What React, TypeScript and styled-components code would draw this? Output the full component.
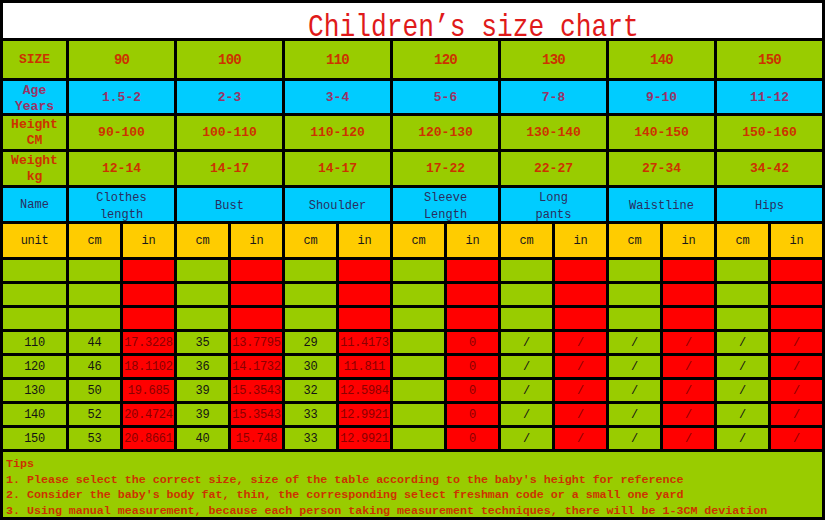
import React from "react";
import styled, { createGlobalStyle } from "styled-components";

const Global = createGlobalStyle`
  html, body { margin: 0; padding: 0; background: #000; }
  body { width: 825px; height: 520px; overflow: hidden; }
`;

const MONO = `"Liberation Mono", "DejaVu Sans Mono", "Noto Sans CJK SC", monospace`;

const GREEN = "#99cc00";
const CYAN = "#00ccff";
const YELLOW = "#ffcc00";
const RED = "#ff0000";

const Chart = styled.div`
  box-sizing: border-box;
  width: 825px;
  height: 520px;
  padding: 3px;
  background: #000;
  display: grid;
  grid-template-columns: 63px repeat(14, 51px);
  grid-template-rows: 35px 37px 32px 33px 33px 33px 33px repeat(8, 21px) 65px;
  gap: 3px;
  font-family: ${MONO};
`;

const TitleBar = styled.div`
  grid-column: 1 / -1;
  background: #fff;
  padding-left: 305px;
  line-height: 50px;
  font-size: 32px;
  color: #e01a1a;
  white-space: nowrap;
`;

const TitleText = styled.span`
  display: inline-block;
  transform: scaleX(0.82);
  transform-origin: left center;
`;

const BaseCell = styled.div<{ $bg: string; $span?: number }>`
  grid-column: span ${(p) => p.$span ?? 1};
  background: ${(p) => p.$bg};
  display: flex;
  flex-direction: column;
  align-items: center;
  justify-content: center;
  text-align: center;
  overflow: hidden;
  white-space: nowrap;
  box-sizing: border-box;
`;

const RowLabel = styled(BaseCell)<{ $color: string; $bold?: boolean; $padTop?: number }>`
  color: ${(p) => p.$color};
  font-weight: ${(p) => (p.$bold ? 700 : 400)};
  font-size: ${(p) => (p.$bold ? "13px" : "12px")};
  line-height: 16px;
  padding-top: ${(p) => p.$padTop ?? 0}px;
`;

const GroupValue = styled(BaseCell)<{ $color: string; $size: number; $spacing?: number }>`
  color: ${(p) => p.$color};
  font-weight: 700;
  font-size: ${(p) => p.$size}px;
  letter-spacing: ${(p) => p.$spacing ?? 0}px;
`;

const NameCell = styled(BaseCell)`
  color: #2b2d5e;
  font-size: 12px;
  line-height: 16.5px;
  padding-top: 4px;
`;

const UnitCell = styled(BaseCell)`
  color: #1a1a1a;
  font-size: 12px;
  letter-spacing: -0.3px;
`;

const DataCell = styled(BaseCell)<{ $color: string }>`
  color: ${(p) => p.$color};
  font-size: 12px;
  letter-spacing: -0.3px;
`;

const TipsBox = styled.div`
  grid-column: 1 / -1;
  background: ${GREEN};
  color: #cc3300;
  font-weight: 700;
  font-size: 11.7px;
  line-height: 15.5px;
  padding: 5px 0 0 3px;
  white-space: pre;
  overflow: hidden;
  letter-spacing: -0.03px;
`;

type HeadRow = {
  bg: string;
  label: string[];
  labelColor: string;
  labelPad?: number;
  values: string[];
  color: string;
  size: number;
  spacing?: number;
};

const headRows: HeadRow[] = [
  {
    bg: GREEN,
    label: ["SIZE"],
    labelColor: "#cc3300",
    values: ["90", "100", "110", "120", "130", "140", "150"],
    color: "#cc3300",
    size: 14,
    spacing: -0.8,
  },
  {
    bg: CYAN,
    label: ["Age", "Years"],
    labelColor: "#993366",
    labelPad: 4,
    values: ["1.5-2", "2-3", "3-4", "5-6", "7-8", "9-10", "11-12"],
    color: "#993366",
    size: 13,
  },
  {
    bg: GREEN,
    label: ["Height", "CM"],
    labelColor: "#cc3300",
    values: ["90-100", "100-110", "110-120", "120-130", "130-140", "140-150", "150-160"],
    color: "#cc3300",
    size: 13,
  },
  {
    bg: GREEN,
    label: ["Weight", "kg"],
    labelColor: "#cc3300",
    values: ["12-14", "14-17", "14-17", "17-22", "22-27", "27-34", "34-42"],
    color: "#cc3300",
    size: 13,
  },
];

const names: string[][] = [
  ["Clothes", "length"],
  ["Bust"],
  ["Shoulder"],
  ["Sleeve", "Length"],
  ["Long", "pants"],
  ["Waistline"],
  ["Hips"],
];

const dataRows: string[][] = [
  Array(15).fill(""),
  Array(15).fill(""),
  Array(15).fill(""),
  ["110", "44", "17.3228", "35", "13.7795", "29", "11.4173", "", "0", "/", "/", "/", "/", "/", "/"],
  ["120", "46", "18.1102", "36", "14.1732", "30", "11.811", "", "0", "/", "/", "/", "/", "/", "/"],
  ["130", "50", "19.685", "39", "15.3543", "32", "12.5984", "", "0", "/", "/", "/", "/", "/", "/"],
  ["140", "52", "20.4724", "39", "15.3543", "33", "12.9921", "", "0", "/", "/", "/", "/", "/", "/"],
  ["150", "53", "20.8661", "40", "15.748", "33", "12.9921", "", "0", "/", "/", "/", "/", "/", "/"],
];

const tips = [
  "Tips",
  "1. Please select the correct size, size of the table according to the baby's height for reference",
  "2. Consider the baby's body fat, thin, the corresponding select freshman code or a small one yard",
  "3. Using manual measurement, because each person taking measurement techniques, there will be 1-3CM deviation",
].join("\n");

const Lines = ({ lines }: { lines: string[] }) => (
  <>
    {lines.map((l) => (
      <span key={l}>{l}</span>
    ))}
  </>
);

export default function App() {
  return (
    <>
      <Global />
      <Chart>
        <TitleBar>
          <TitleText>Children’s size chart</TitleText>
        </TitleBar>

        {headRows.map((row, ri) => (
          <React.Fragment key={`h${ri}`}>
            <RowLabel $bg={row.bg} $color={row.labelColor} $bold $padTop={row.labelPad}>
              <Lines lines={row.label} />
            </RowLabel>
            {row.values.map((v, vi) => (
              <GroupValue
                key={vi}
                $bg={row.bg}
                $span={2}
                $color={row.color}
                $size={row.size}
                $spacing={row.spacing}
              >
                {v}
              </GroupValue>
            ))}
          </React.Fragment>
        ))}

        <RowLabel $bg={CYAN} $color="#2b2d5e">
          Name
        </RowLabel>
        {names.map((n, i) => (
          <NameCell key={`n${i}`} $bg={CYAN} $span={2}>
            <Lines lines={n} />
          </NameCell>
        ))}

        <UnitCell $bg={YELLOW}>unit</UnitCell>
        {Array.from({ length: 14 }).map((_, i) => (
          <UnitCell key={`u${i}`} $bg={YELLOW}>
            {i % 2 === 0 ? "cm" : "in"}
          </UnitCell>
        ))}

        {dataRows.map((row, ri) =>
          row.map((v, ci) => {
            const isRed = ci > 0 && ci % 2 === 0;
            return (
              <DataCell
                key={`d${ri}-${ci}`}
                $bg={isRed ? RED : GREEN}
                $color={isRed ? "#8a0000" : "#141414"}
              >
                {v}
              </DataCell>
            );
          })
        )}

        <TipsBox>{tips}</TipsBox>
      </Chart>
    </>
  );
}
